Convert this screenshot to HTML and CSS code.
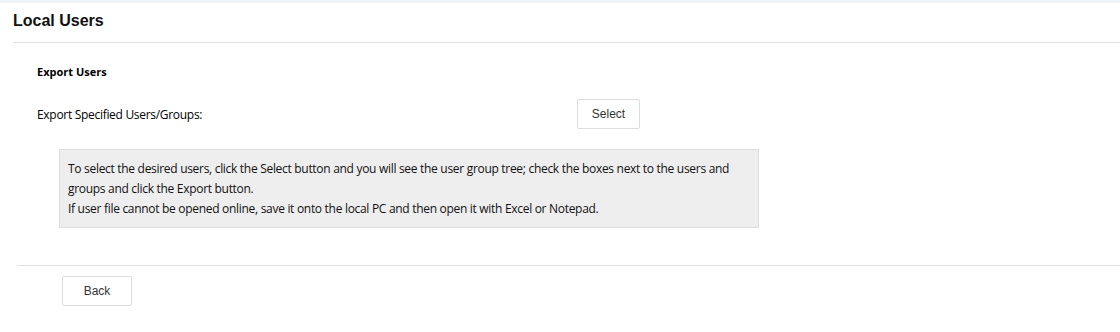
FILE: index.html
```html
<!DOCTYPE html>
<html lang="en">
<head>
    <meta charset="UTF-8">
    <title>Local Users</title>
    <link rel="stylesheet" href="styles.css">
</head>
<body>
    <div class="top-strip"></div>
    <div class="page">
        <h1 class="page-title">Local Users</h1>

        <div class="section">
            <h2 class="section-title">Export Users</h2>

            <div class="form-row">
                <span class="form-label">Export Specified Users/Groups:</span>
                <button class="btn">Select</button>
            </div>

            <div class="tip">
                <p>To select the desired users, click the Select button and you will see the user group tree; check the boxes next to the users and groups and click the Export button.</p>
                <p>If user file cannot be opened online, save it onto the local PC and then open it with Excel or Notepad.</p>
            </div>
        </div>

        <div class="footer">
            <button class="btn btn-back">Back</button>
        </div>
    </div>
</body>
</html>
```

FILE: styles.css
```css
body {
    margin: 0;
    background: #fff;
    font-family: "Open Sans", "Noto Sans", sans-serif;
    letter-spacing: -0.3px;
    color: #000;
}
.top-strip {
    height: 3px;
    background-color: #eef2f9;
}
.page {
    padding-left: 13px;
}
.page-title {
    font-family: "Liberation Sans", Arial, sans-serif;
    font-size: 16px;
    font-weight: bold;
    letter-spacing: 0;
    color: #111;
    margin: 0;
    height: 39px;
    line-height: 36px;
    border-bottom: 1px solid #e0dfea;
}
.section {
    padding: 20px 0 0 24px;
}
.section-title {
    font-size: 11px;
    font-weight: bold;
    letter-spacing: 0;
    margin: 0;
    line-height: 18px;
}
.form-row {
    display: flex;
    align-items: center;
    margin-top: 18px;
    height: 30px;
}
.form-label {
    font-size: 12px;
    width: 540px;
}
.btn {
    font-family: "Liberation Sans", Arial, sans-serif;
    font-size: 12px;
    letter-spacing: 0;
    color: #333;
    background: #fff;
    border: 1px solid #ddd;
    border-radius: 2px;
    width: 63px;
    height: 30px;
    padding: 0;
    cursor: pointer;
}
.tip {
    margin: 20px 0 0 22px;
    width: 682px;
    padding: 9px 8px 8px 8px;
    background-color: #eeeeee;
    border: 1px solid #dddddd;
    font-size: 12px;
    line-height: 20px;
    color: #111;
}
.tip p {
    margin: 0;
}
.footer {
    margin: 37px 0 0 4px;
    border-top: 1px solid #e0dfea;
    padding: 10px 0 0 45px;
}
.btn-back {
    width: 70px;
}
```
